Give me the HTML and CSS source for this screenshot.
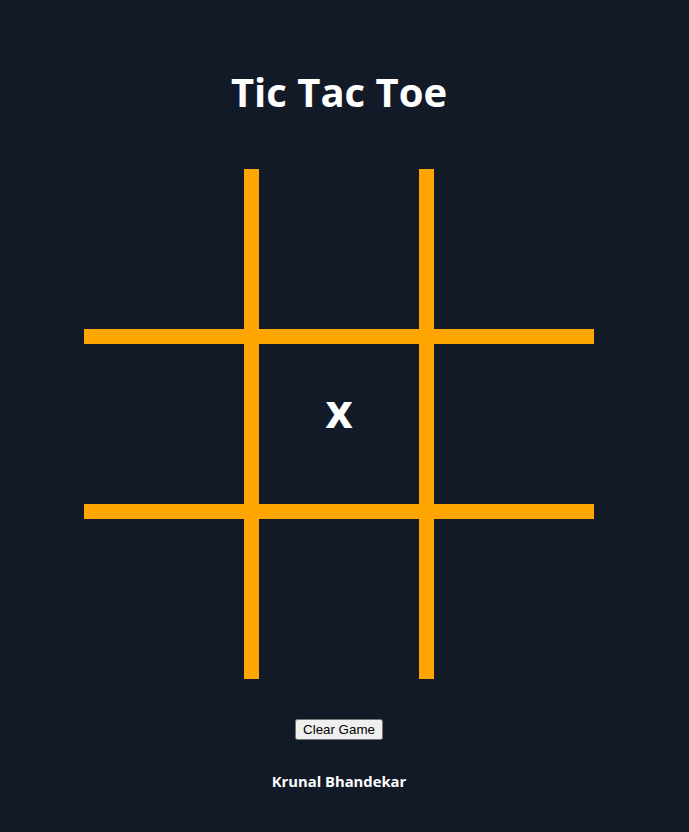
FILE: index.html
```html
<!DOCTYPE html>
<html lang="en">
<head>
<meta charset="utf-8">
<title>Tic Tac Toe</title>
<link rel="stylesheet" href="styles.css">
</head>
<body>
<main class="app">
  <h1 class="title">Tic Tac Toe</h1>
  <div class="board">
    <div class="cell"></div>
    <div class="cell"></div>
    <div class="cell"></div>
    <div class="cell"></div>
    <div class="cell"><span class="mark">x</span></div>
    <div class="cell"></div>
    <div class="cell"></div>
    <div class="cell"></div>
    <div class="cell"></div>
  </div>
  <button class="clear" type="button">Clear Game</button>
  <footer class="credit">Krunal Bhandekar</footer>
</main>
</body>
</html>
```

FILE: styles.css
```css
html, body {
  margin: 0;
  padding: 0;
  background: #131a27;
}
body {
  font-family: "Open Sans", "Noto Sans", sans-serif;
  color: #ffffff;
}
.app {
  width: 678px;
  display: flex;
  flex-direction: column;
  align-items: center;
}
.title {
  margin: 68px 0 0;
  font-size: 40px;
  line-height: 48px;
  font-weight: 700;
}
.board {
  margin-top: 53px;
  display: grid;
  grid-template-columns: repeat(3, 160px);
  grid-template-rows: repeat(3, 160px);
  gap: 15px;
  background: #ffa500;
}
.cell {
  background: #131a27;
  display: flex;
  align-items: center;
  justify-content: center;
}
.mark {
  font-size: 47px;
  font-weight: 700;
  line-height: 1;
  margin-bottom: 28px;
}
.clear {
  margin-top: 40px;
  font-family: Arial, "Liberation Sans", sans-serif;
  font-size: 13.33px;
}
.credit {
  margin-top: 31px;
  font-size: 14.8px;
  font-weight: 700;
}
```
